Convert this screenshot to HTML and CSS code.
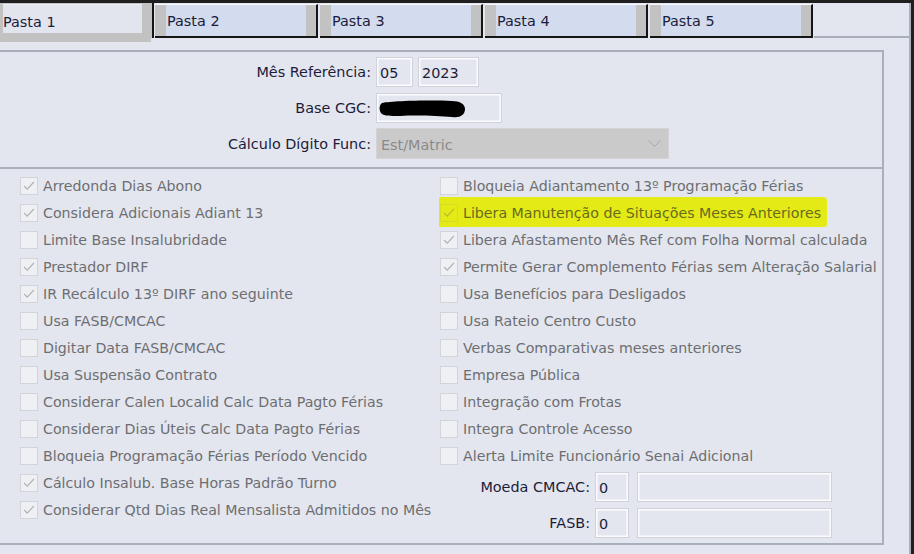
FILE: index.html
```html
<!DOCTYPE html>
<html lang="pt-BR">
<head>
<meta charset="utf-8">
<title>Parâmetros</title>
<link rel="stylesheet" href="styles.css">
</head>
<body>
<div class="window">
  <div class="tabs">
    <div class="tab active"><div class="tab-face">Pasta 1</div></div>
    <div class="tab">Pasta 2</div>
    <div class="tab">Pasta 3</div>
    <div class="tab">Pasta 4</div>
    <div class="tab">Pasta 5</div>
    <div class="tab-fill"></div>
  </div>
  <div class="panel">
    <div class="active-foot"></div>
    <div class="group group-head">
      <div class="form-grid">
        <div class="lbl">Mês Referência:</div>
        <div class="fields">
          <div class="field f-mes">05</div>
          <div class="field f-ano">2023</div>
        </div>
        <div class="lbl">Base CGC:</div>
        <div class="fields">
          <div class="field f-cgc">
            <svg class="redact" width="90" height="22" viewBox="0 0 90 22"><path d="M4,4 C14,2 50,1 74,2 C82,2 87,5 87,10 C87,16 82,19 74,18 C60,17 40,16 22,17 C12,17 5,17 3,14 C1,11 1,6 4,4 Z" fill="#000"/></svg>
          </div>
        </div>
        <div class="lbl">Cálculo Dígito Func:</div>
        <div class="fields">
          <div class="combo">
            <span>Est/Matric</span>
            <svg class="chev" width="13" height="8" viewBox="0 0 13 8"><polyline points="0.5,0.5 6.5,6.5 12.5,0.5" fill="none" stroke="#a6a6a6" stroke-width="1"/></svg>
          </div>
        </div>
      </div>
    </div>
    <div class="group group-checks">
      <div class="col">
        <div class="check"><span class="box on"><svg viewBox="0 0 18 18"><polyline points="3.5,9 7,12.5 14.5,4.5"/></svg></span><span class="txt">Arredonda Dias Abono</span></div>
        <div class="check"><span class="box on"><svg viewBox="0 0 18 18"><polyline points="3.5,9 7,12.5 14.5,4.5"/></svg></span><span class="txt">Considera Adicionais Adiant 13</span></div>
        <div class="check"><span class="box"></span><span class="txt">Limite Base Insalubridade</span></div>
        <div class="check"><span class="box on"><svg viewBox="0 0 18 18"><polyline points="3.5,9 7,12.5 14.5,4.5"/></svg></span><span class="txt">Prestador DIRF</span></div>
        <div class="check"><span class="box on"><svg viewBox="0 0 18 18"><polyline points="3.5,9 7,12.5 14.5,4.5"/></svg></span><span class="txt">IR Recálculo 13º DIRF ano seguinte</span></div>
        <div class="check"><span class="box"></span><span class="txt">Usa FASB/CMCAC</span></div>
        <div class="check"><span class="box"></span><span class="txt">Digitar Data FASB/CMCAC</span></div>
        <div class="check"><span class="box"></span><span class="txt">Usa Suspensão Contrato</span></div>
        <div class="check"><span class="box"></span><span class="txt">Considerar Calen Localid Calc Data Pagto Férias</span></div>
        <div class="check"><span class="box"></span><span class="txt">Considerar Dias Úteis Calc Data Pagto Férias</span></div>
        <div class="check"><span class="box"></span><span class="txt">Bloqueia Programação Férias Período Vencido</span></div>
        <div class="check"><span class="box on"><svg viewBox="0 0 18 18"><polyline points="3.5,9 7,12.5 14.5,4.5"/></svg></span><span class="txt">Cálculo Insalub. Base Horas Padrão Turno</span></div>
        <div class="check"><span class="box on"><svg viewBox="0 0 18 18"><polyline points="3.5,9 7,12.5 14.5,4.5"/></svg></span><span class="txt">Considerar Qtd Dias Real Mensalista Admitidos no Mês</span></div>
      </div>
      <div class="col col-right">
        <div class="check"><span class="box"></span><span class="txt">Bloqueia Adiantamento 13º Programação Férias</span></div>
        <div class="check hl"><span class="box on"><svg viewBox="0 0 18 18"><polyline points="3.5,9 7,12.5 14.5,4.5"/></svg></span><span class="txt">Libera Manutenção de Situações Meses Anteriores</span></div>
        <div class="check"><span class="box on"><svg viewBox="0 0 18 18"><polyline points="3.5,9 7,12.5 14.5,4.5"/></svg></span><span class="txt">Libera Afastamento Mês Ref com Folha Normal calculada</span></div>
        <div class="check"><span class="box on"><svg viewBox="0 0 18 18"><polyline points="3.5,9 7,12.5 14.5,4.5"/></svg></span><span class="txt">Permite Gerar Complemento Férias sem Alteração Salarial</span></div>
        <div class="check"><span class="box"></span><span class="txt">Usa Benefícios para Desligados</span></div>
        <div class="check"><span class="box"></span><span class="txt">Usa Rateio Centro Custo</span></div>
        <div class="check"><span class="box"></span><span class="txt">Verbas Comparativas meses anteriores</span></div>
        <div class="check"><span class="box"></span><span class="txt">Empresa Pública</span></div>
        <div class="check"><span class="box"></span><span class="txt">Integração com Frotas</span></div>
        <div class="check"><span class="box"></span><span class="txt">Integra Controle Acesso</span></div>
        <div class="check"><span class="box"></span><span class="txt">Alerta Limite Funcionário Senai Adicional</span></div>
        <div class="moeda-grid">
          <div class="lbl">Moeda CMCAC:</div>
          <div class="field f-code">0</div>
          <div class="field f-desc"></div>
          <div class="lbl">FASB:</div>
          <div class="field f-code">0</div>
          <div class="field f-desc"></div>
        </div>
      </div>
    </div>
  </div>
</div>
</body>
</html>
```
FILE: styles.css
```css
* { box-sizing: border-box; }
html, body { margin: 0; padding: 0; }
body {
  background: #1f1f1f;
  width: 914px;
  height: 554px;
  overflow: hidden;
  font-family: "DejaVu Sans", Verdana, sans-serif;
  font-size: 14.4px;
  color: #1c1c3a;
}
.window {
  margin-top: 3px;
  width: 911px;
  height: 551px;
  background: #e3e6ee;
  display: flex;
  flex-direction: column;
}
.tabs {
  display: flex;
  align-items: flex-end;
  height: 35px;
}
.tab {
  width: 163px;
  height: 34px;
  margin-left: 2px;
  border-top: 1px solid #f7f8fb;
  border-right: 2px solid #151515;
  border-bottom: 2px solid #151515;
  background: linear-gradient(to right, #c2c2c2 0 11px, #d3dcee 11px calc(100% - 10px), #c2c2c2 calc(100% - 10px));
  padding: 1px 0 0 12px;
  line-height: 31px;
  color: #1c1c3a;
  white-space: nowrap;
}
.tab.active {
  width: 154px;
  height: 35px;
  margin-left: 0;
  border-top: 0;
  border-bottom: 0;
  border-right: 2px solid #151515;
  background: #c2c2c2;
  padding: 1px 10px 0 0;
}
.tab.active + .tab { margin-left: 1px; }
.tab-face {
  height: 29px;
  margin-left: 3px;
  background: #e2e5ee;
  border-top: 1px solid #eef0f5;
  padding-top: 4px;
  line-height: 26px;
}
.tab-fill {
  flex: 1;
  align-self: stretch;
  margin-left: 1px;
  border-bottom: 2px solid #a8b0be;
  border-right: 2px solid #a8b0be;
}
.panel {
  flex: 1;
  border-right: 2px solid #a8b0be;
}
.active-foot {
  width: 151px;
  height: 4px;
  background: #c2c2c2;
}
.group {
  margin-right: 25px;
  border-right: 2px solid #a8b0be;
  border-bottom: 2px solid #a8b0be;
}
.group-head {
  margin-top: 8px;
  border-top: 2px solid #a8b0be;
  padding: 5px 0 8px;
}
.form-grid {
  display: grid;
  grid-template-columns: 371px auto;
  column-gap: 5px;
  row-gap: 6px;
  align-items: center;
}
.form-grid .lbl { text-align: right; }
.fields { display: flex; gap: 5px; }
.field {
  height: 30px;
  border: 1px solid #cfd2d8;
  box-shadow: inset 0 0 0 1.5px #fbfbfd;
  padding: 4px 0 0 3px;
  color: #1c1c3a;
  line-height: 22px;
}
.f-mes { width: 37px; }
.f-ano { width: 61px; }
.f-cgc { width: 126px; padding: 5px 0 0 1px; }
.redact { display: block; }
.combo {
  width: 293px;
  height: 31px;
  margin-top: -1px;
  background: #cacaca;
  border: 1px solid #d3d3d3;
  display: flex;
  align-items: center;
  justify-content: space-between;
  padding: 2px 7px 0 4px;
  color: #8a8a8a;
}
.chev { display: block; margin-top: -2px; }
.group-checks {
  display: grid;
  grid-template-columns: 420px 1fr;
  align-items: start;
  padding: 3px 0 5px 20px;
  font-size: 14.2px;
}
.check {
  height: 27px;
  display: flex;
  align-items: center;
  gap: 5px;
  white-space: nowrap;
  color: #6e6e72;
}
.box {
  flex: none;
  width: 18px;
  height: 18px;
  border: 1px solid #d2d4d9;
  background: #eff0f4;
  display: block;
}
.box svg {
  display: block;
  width: 16px;
  height: 16px;
  fill: none;
  stroke: #b2b2b2;
  stroke-width: 1.3;
}
.check.hl {
  width: 388px;
  height: 30px;
  margin: -2px 0 -1px -1px;
  padding: 1px 0 0 1px;
  background: #e4ea16;
  border-radius: 2px 4px 3px 1px;
  color: #6a6a1e;
}
.check.hl .box {
  background: transparent;
  border-color: #d6dc2a;
}
.check.hl .box svg { stroke: #b8bc2c; }
.moeda-grid {
  display: grid;
  grid-template-columns: 150px 34px 198px;
  column-gap: 5px;
  row-gap: 6px;
  align-items: center;
  margin-top: 3px;
  font-size: 14.4px;
}
.moeda-grid .lbl { text-align: right; color: #1c1c3a; }
.f-desc { margin-left: 3px; }
```
